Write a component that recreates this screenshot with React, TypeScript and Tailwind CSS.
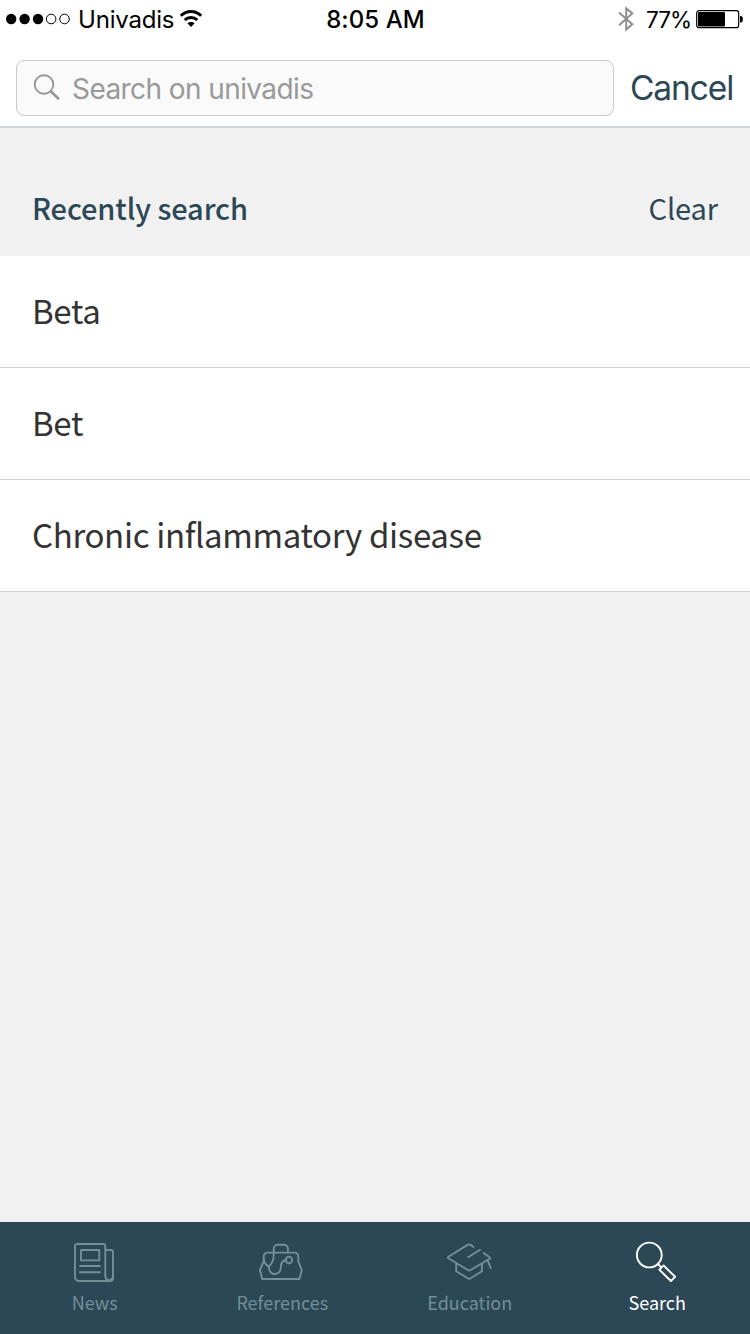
import type { ReactNode } from 'react';

const ui = "font-['Inter','Liberation_Sans',sans-serif]";
const humanist = "font-['Noto_Sans_CJK_SC','Noto_Sans',sans-serif]";

function StatusBar() {
  return (
    <div className={`${ui} flex h-10 shrink-0 items-center text-[24px] leading-10 text-black`}>
      <div className="flex flex-1 items-center pl-[6px]">
        <svg width="65" height="12" viewBox="0 0 65 12" className="mb-[2px] shrink-0">
          <circle cx="5.2" cy="6" r="5.2" />
          <circle cx="18.6" cy="6" r="5.2" />
          <circle cx="32" cy="6" r="5.2" />
          <g fill="none" stroke="black" strokeWidth="1">
            <circle cx="45.1" cy="6" r="4.8" />
            <circle cx="58.5" cy="6" r="4.8" />
          </g>
        </svg>
        <span className="ml-[7px] w-[97px] whitespace-nowrap tracking-[-0.2px]">Univadis</span>
        <svg width="24" height="20" viewBox="0 0 24 20" className="ml-[4px] mb-[2px] shrink-0" fill="none" stroke="black" strokeWidth="3">
          <path d="M1.8 6.8C7.5 1.1 16.5 1.1 22.2 6.8" />
          <path d="M5.7 11C9.2 7.6 14.8 7.6 18.3 11" />
          <path d="M12 18L8.4 14.3C10.4 12.5 13.6 12.5 15.6 14.3Z" fill="black" stroke="none" />
        </svg>
      </div>
      <span className="ml-px whitespace-nowrap font-medium tracking-[0.1px]">8:05 AM</span>
      <div className="flex flex-1 items-center justify-end pr-[6px]">
        <svg width="16" height="26" viewBox="0 0 16 26" fill="none" stroke="#8e8e8e" strokeWidth="2" className="mb-[2px] shrink-0">
          <path d="M1 6.5L14.3 18.3L8.2 23.6V2.4L14.3 7.4L1 19.3" />
        </svg>
        <span className="ml-[12px] w-[45px] pb-px whitespace-nowrap text-[22.5px] tracking-[-1px]">77%</span>
        <svg width="48" height="20" viewBox="0 0 48 20" className="ml-[5px] mb-[2px] shrink-0">
          <rect x="0.7" y="1.7" width="42" height="17" rx="2.5" fill="none" stroke="black" strokeWidth="1.2" />
          <rect x="2" y="3" width="27" height="14.4" rx="1" />
          <path d="M44 7h.5a2.3 2.3 0 0 1 2.3 2.3v2a2.3 2.3 0 0 1-2.3 2.3H44z" />
        </svg>
      </div>
    </div>
  );
}

function SearchHeader() {
  return (
    <header className={`${ui} flex h-[88px] shrink-0 border-b-2 border-[#ced9dd] pt-5 pl-4`}>
      <div className="flex h-14 w-[598px] items-center rounded-[8px] border border-[#c9c9c9] bg-[#fafafa] pl-4">
        <svg width="28" height="28" viewBox="0 0 28 28" fill="none" stroke="#979797" className="shrink-0">
          <circle cx="11" cy="10.5" r="9.3" strokeWidth="1.9" />
          <path d="M17.7 17.2L26 25.3" strokeWidth="2.6" />
        </svg>
        <span className="ml-[11px] pt-px whitespace-nowrap text-[28px] leading-[54px] tracking-[-0.58px] text-[#999]">Search on univadis</span>
      </div>
      <button className="ml-4 h-14 whitespace-nowrap text-[33.5px] leading-[56px] tracking-[-1.1px] text-[#2c4755]">Cancel</button>
    </header>
  );
}

const tabs: { label: string; active?: boolean; icon: ReactNode }[] = [
  {
    label: 'News',
    icon: (
      <>
        <path d="M31.3 34V4a2 2 0 0 0-2-2H3a2 2 0 0 0-2 2v31a4 4 0 0 0 4 4h31a3 3 0 0 0 3-3V10a2 2 0 0 0-2-2h-5.7" />
        <path d="M31.3 34c0 6 7.5 5 7.7 0M7 8h18.3v10.4H7zM6 24h20M6 30.2h20" />
      </>
    ),
  },
  {
    label: 'References',
    icon: (
      <g transform="translate(-1 0)">
        <path d="M13.7 10.6V6.7a4 4 0 0 1 4-4h6.2a4 4 0 0 1 4 4v3.9" />
        <path d="M3.7 19.5V14.6a4 4 0 0 1 4-4h26.6a4 4 0 0 1 4 4v4.9l3.5 8.5-2.3 9H2.2L-.1 28z" />
        <path d="M13.7 10.6V14c0 4-1.8 7.8-5 10.5-3-1.8-5-4.8-5-8.5M8.7 24.5c.4 4.8 2.6 7.5 5.9 7.5 3.6 0 6.2-2.6 6.3-7 .1-4.2 1.5-6.4 4.9-7" />
        <circle cx="29" cy="18" r="3.2" />
      </g>
    ),
  },
  {
    label: 'Education',
    icon: (
      <>
        <path d="M24.5 5l-3-2.1c-1-.7-2-.7-3 0L-.6 14.7c-.7.5-.7 1.1 0 1.6L18.8 28c1 .6 1.8.6 2.8 0l18.7-11c1.3-.8 1.3-1.2 0-2L34.6 11" />
        <path d="M19 15.3L31 7.8M38.5 18l3.2 8M7.2 22v7.2L18.8 36.3c1 .6 1.8.6 2.8 0l11.3-7.1V22" />
      </>
    ),
  },
  {
    label: 'Search',
    active: true,
    icon: (
      <>
        <circle cx="13.3" cy="13" r="12.4" />
        <path d="M21.9 21.8l3.6 3.8M23.4 27.7l4.2-4.2L39.1 34.8l-4.2 4.2z" />
      </>
    ),
  },
];

export default function App() {
  return (
    <div className="flex h-[1334px] w-[750px] flex-col overflow-hidden bg-white">
      <StatusBar />
      <SearchHeader />
      <main className={`${humanist} flex-1 bg-[#f1f1f1]`}>
        <div className="flex h-32 items-end justify-between px-8 text-[29px] text-[#2c4755]">
          <h2 className="mb-[29px] whitespace-nowrap font-medium leading-10 tracking-[-0.1px]">Recently search</h2>
          <button className="mb-[29px] whitespace-nowrap leading-10 tracking-[-0.1px]">Clear</button>
        </div>
        <ul>
          {['Beta', 'Bet', 'Chronic inflammatory disease'].map((term) => (
            <li key={term} className="flex h-28 items-center border-b border-[#ccd4d7] bg-white pb-1 pl-8 text-[33px] leading-[48px] tracking-[-0.35px] whitespace-nowrap text-[#333]">
              {term}
            </li>
          ))}
        </ul>
      </main>
      <nav className={`${humanist} grid h-28 shrink-0 grid-cols-4 bg-[#2c4755]`}>
        {tabs.map((tab) => (
          <button key={tab.label} className={`flex flex-col items-center pt-5 pl-[2px] ${tab.active ? 'text-white' : 'text-[#748e9a]'}`}>
            <svg width="42" height="42" viewBox="0 0 42 42" className="overflow-visible" fill="none" stroke="currentColor" strokeWidth="1.9" strokeLinejoin="round" strokeLinecap="round">
              {tab.icon}
            </svg>
            <span className="mt-1 text-[18px] leading-7">{tab.label}</span>
          </button>
        ))}
      </nav>
    </div>
  );
}
